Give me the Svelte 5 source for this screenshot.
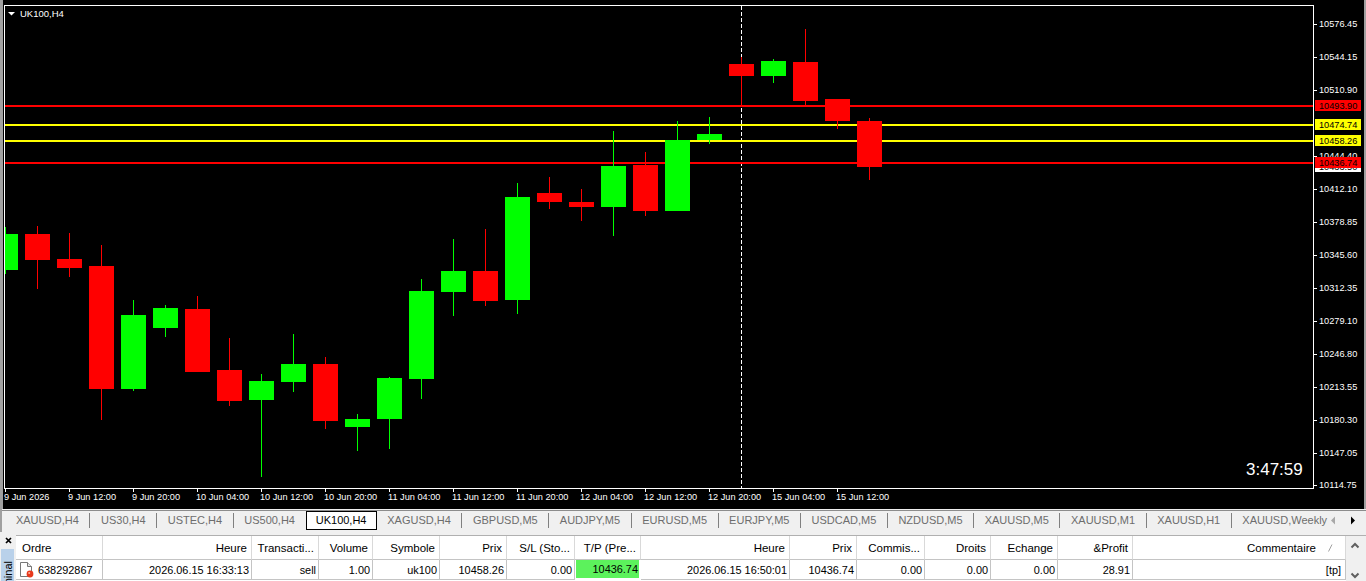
<script>
	// body: [center x, open-top, bottom, wick top, wick bottom, up?]
	const candles = [
		[5, 234, 270, 227, 274, 1],
		[37, 234, 260, 226, 289, 0],
		[69, 259, 268, 233, 277, 0],
		[101, 266, 389, 245, 420, 0],
		[133, 315, 389, 300, 391, 1],
		[165, 308, 328, 305, 337, 1],
		[197, 309, 372, 296, 372, 0],
		[229, 370, 401, 338, 406, 0],
		[261, 381, 400, 374, 477, 1],
		[293, 364, 382, 334, 392, 1],
		[325, 364, 421, 357, 429, 0],
		[357, 419, 427, 414, 451, 1],
		[389, 378, 419, 377, 449, 1],
		[421, 291, 379, 279, 399, 1],
		[453, 271, 292, 239, 316, 1],
		[485, 271, 301, 229, 306, 0],
		[517, 197, 300, 183, 314, 1],
		[549, 193, 202, 177, 209, 0],
		[581, 202, 207, 189, 221, 0],
		[613, 166, 207, 131, 236, 1],
		[645, 165, 211, 152, 216, 0],
		[677, 140, 211, 121, 211, 1],
		[709, 134, 140, 117, 144, 1],
		[741, 64, 76, 57, 105, 0],
		[773, 61, 76, 59, 83, 1],
		[805, 62, 101, 29, 105, 0],
		[837, 99, 121, 99, 129, 0],
		[869, 121, 167, 118, 180, 0]
	];

	const priceLabels = [
		['10576.45', 24], ['10544.15', 57], ['10510.90', 90], ['10444.40', 156],
		['10412.10', 189], ['10378.85', 222], ['10345.60', 255], ['10312.35', 288],
		['10279.10', 321], ['10246.80', 354], ['10213.55', 387], ['10180.30', 420],
		['10147.05', 453], ['10114.75', 485]
	];

	const levels = [
		{ y: 105, color: '#ff0000', label: '10493.90' },
		{ y: 124, color: '#ffff00', label: '10474.74' },
		{ y: 140, color: '#ffff00', label: '10458.26' },
		{ y: 162, color: '#ff0000', label: '10436.74' }
	];

	const dates = [
		'9 Jun 2026', '9 Jun 12:00', '9 Jun 20:00', '10 Jun 04:00', '10 Jun 12:00',
		'10 Jun 20:00', '11 Jun 04:00', '11 Jun 12:00', '11 Jun 20:00', '12 Jun 04:00',
		'12 Jun 12:00', '12 Jun 20:00', '15 Jun 04:00', '15 Jun 12:00'
	];

	const tabs = [
		'XAUUSD,H4', 'US30,H4', 'USTEC,H4', 'US500,H4', 'UK100,H4', 'XAGUSD,H4', 'GBPUSD,M5',
		'AUDJPY,M5', 'EURUSD,M5', 'EURJPY,M5', 'USDCAD,M5', 'NZDUSD,M5', 'XAUUSD,M5',
		'XAUUSD,M1', 'XAUUSD,H1', 'XAUUSD,Weekly'
	];
	const activeTab = 'UK100,H4';

	const columns = [
		{ head: 'Ordre', value: '638292867', left: true },
		{ head: 'Heure', value: '2026.06.15 16:33:13' },
		{ head: 'Transacti...', value: 'sell' },
		{ head: 'Volume', value: '1.00' },
		{ head: 'Symbole', value: 'uk100' },
		{ head: 'Prix', value: '10458.26' },
		{ head: 'S/L (Sto...', value: '0.00' },
		{ head: 'T/P (Pre...', value: '10436.74', hit: true },
		{ head: 'Heure', value: '2026.06.15 16:50:01' },
		{ head: 'Prix', value: '10436.74' },
		{ head: 'Commis...', value: '0.00' },
		{ head: 'Droits', value: '0.00' },
		{ head: 'Echange', value: '0.00' },
		{ head: '&Profit', value: '28.91' },
		{ head: 'Commentaire', value: '[tp]', sort: true }
	];
</script>

<div class="terminal">
	<div class="chart">
		<svg width="1361" height="509" viewBox="3 0 1361 509">
			<rect x="4" y="5" width="1309" height="483" fill="none" stroke="#fff" stroke-width="1" transform="translate(0.5 0.5)" />
			<polygon points="8,12 15,12 11.5,15.5" fill="#fff" />
			<text class="symbol" x="20" y="16.5">UK100,H4</text>

			<line x1="741.5" y1="6" x2="741.5" y2="488" stroke="#fff" stroke-dasharray="4 2" />

			{#each levels as level}
				<rect x="5" y={level.y} width="1308" height="2" fill={level.color} />
			{/each}

			{#each candles as [x, top, bottom, wickTop, wickBottom, up]}
				<rect x={x} y={wickTop} width="1" height={wickBottom - wickTop} fill={up ? '#00ff00' : '#ff0000'} />
				<rect
					x={Math.max(x - 12, 5)}
					y={top}
					width={x - 12 < 5 ? x + 13 - 5 : 25}
					height={bottom - top}
					fill={up ? '#00ff00' : '#ff0000'}
				/>
			{/each}

			{#each priceLabels as [text, y]}
				<rect x="1314" y={y} width="3" height="1" fill="#fff" />
				<text class="axis" x="1319" y={y + 3}>{text}</text>
			{/each}

			<rect x="1315" y="161" width="46" height="11" fill="#fff" />
			<text class="axis dark" x="1319" y="170">10433.50</text>
			{#each levels as level}
				<rect x="1315" y={level.y - 5} width="46" height="11" fill={level.color} />
				<text class="axis dark" x="1319" y={level.y + 4}>{level.label}</text>
			{/each}

			{#each dates as date, i}
				<rect x={5 + i * 64} y="489" width="1" height="3" fill="#fff" />
				<text class="axis" x={4 + i * 64} y="500">{date}</text>
			{/each}

			<text class="clock" x="1246" y="475">3:47:59</text>
		</svg>
	</div>

	<div class="tabs">
		<div class="tab-list">
			{#each tabs as tab, i}
				<span class="tab" class:active={tab === activeTab} class:plain={tabs[i + 1] === activeTab || tab === activeTab}>{tab}</span>
			{/each}
		</div>
		<div class="tab-arrows">
			<svg width="6" height="9" viewBox="0 0 6 9"><path d="M5 0.5 L1 4.5 L5 8.5 Z" fill="#a8a8a8" /></svg>
			<svg width="6" height="9" viewBox="0 0 6 9"><path d="M1 0.5 L5 4.5 L1 8.5 Z" fill="#000" /></svg>
		</div>
	</div>

	<div class="panel">
		<div class="side">
			<svg class="close" width="7" height="7" viewBox="0 0 7 7">
				<path d="M1 1 L6 6 M6 1 L1 6" stroke="#000" stroke-width="1.7" />
			</svg>
			<div class="side-tab"><span>Terminal</span></div>
		</div>

		<div class="table">
			{#each columns as col}
				<div class="cell head" class:left={col.left}>
					{col.head}
					{#if col.sort}
						<svg class="sort" width="5" height="8" viewBox="0 0 5 8"><path d="M0.5 7.5 L4 0.5" stroke="#a0a0a0" fill="none" /></svg>
					{/if}
				</div>
			{/each}
			{#each columns as col, i}
				<div class="cell value" class:left={col.left} class:hit={col.hit}>
					{#if i === 0}
						<svg class="order-icon" width="16" height="17" viewBox="0 0 16 17">
							<path d="M1.5 1.5 H8.5 L12.5 5.5 V15.5 H1.5 Z" fill="#fff" stroke="#777" />
							<path d="M8.5 1.5 V5.5 H12.5" fill="#e8e8e8" stroke="#777" />
							<circle cx="11" cy="13" r="3.4" fill="#e8391c" />
							<circle cx="10.2" cy="12" r="1" fill="#ffb09a" />
						</svg>
					{/if}
					{col.value}
				</div>
			{/each}
		</div>

		<div class="scroll">
			<svg width="10" height="7" viewBox="0 0 10 7"><path d="M1.5 5.5 L5 2 L8.5 5.5" stroke="#606060" stroke-width="2" fill="none" /></svg>
			<svg width="10" height="7" viewBox="0 0 10 7"><path d="M1.5 1.5 L5 5 L8.5 1.5" stroke="#606060" stroke-width="2" fill="none" /></svg>
		</div>
	</div>
</div>

<style>
	:global(body) {
		margin: 0;
		background: #f0f0f0;
	}

	.terminal {
		width: 1366px;
		height: 581px;
		display: flex;
		flex-direction: column;
		overflow: hidden;
		background: #f0f0f0;
		font-family: 'Liberation Sans', Arial, sans-serif;
		font-size: 11px;
		color: #000;
	}

	.chart {
		height: 509px;
		flex: none;
		background: #000;
		border-left: 3px solid #a0a0a0;
		border-right: 2px solid #a0a0a0;
		box-sizing: border-box;
	}

	.chart svg {
		display: block;
	}

	.chart text {
		font-family: 'Liberation Sans', Arial, sans-serif;
		fill: #fff;
	}

	.symbol {
		font-size: 9.5px;
	}

	.axis {
		font-size: 9.2px;
	}

	.chart text.dark {
		fill: #000;
	}

	.clock {
		font-size: 17px;
	}

	.tabs {
		height: 23px;
		flex: none;
		box-sizing: border-box;
		padding-top: 2px;
		padding-left: 3.4px;
		display: flex;
		border-left: 2px solid #a0a0a0;
		background: linear-gradient(#f0f0f0 1px, #8c8c8c 1px, #8c8c8c 2px, #f0f0f0 2px);
	}

	.tab-list {
		width: 1322.6px;
		height: 19px;
		flex: none;
		display: flex;
		overflow: hidden;
		white-space: nowrap;
	}

	.tab {
		flex: none;
		height: 15px;
		margin-top: 2px;
		line-height: 15px;
		padding: 0 10.55px;
		color: #6d6d6d;
		border-right: 1px solid #808080;
	}

	.tab.plain {
		border-right-color: transparent;
	}

	.tab.active {
		margin-top: 0;
		height: 17px;
		line-height: 17px;
		color: #000;
		background: #fff;
		padding: 0 9.2px;
		margin-left: -1px;
		border: 1px solid #000;
	}

	.tab-arrows {
		flex: 1;
		display: flex;
		align-items: center;
		gap: 14px;
		padding-left: 2px;
		padding-bottom: 3px;
	}

	.panel {
		flex: 1;
		min-height: 0;
		display: flex;
		padding-top: 3px;
	}

	.side {
		width: 16px;
		flex: none;
		display: flex;
		flex-direction: column;
		align-items: center;
		padding-top: 2px;
		box-sizing: border-box;
	}

	.close {
		flex: none;
	}

	.side-tab {
		width: 13px;
		flex: 1;
		margin-top: 5px;
		margin-left: -2px;
		background: #b9d1ea;
		position: relative;
		overflow: hidden;
	}

	.side-tab span {
		position: absolute;
		left: 1px;
		top: 12px;
		line-height: 12px;
		writing-mode: vertical-rl;
		transform: rotate(180deg);
	}

	.table {
		width: 1330px;
		flex: none;
		display: grid;
		grid-template-columns: 87px 149px 67px 54px 67px 67px 68px 66px 149px 67px 68px 66px 67px 75px 213px;
		grid-template-rows: 24px 20px;
		background: #fff;
		border-top: 1px solid #b0b0b0;
	}

	.cell {
		box-sizing: border-box;
		padding: 0 4px;
		display: flex;
		align-items: center;
		justify-content: flex-end;
		white-space: nowrap;
		border-right: 1px solid #d9d9d9;
	}

	.cell.left {
		justify-content: flex-start;
		padding-left: 6px;
	}

	.head {
		border-bottom: 1px solid #c4c4c4;
		font-size: 11.5px;
	}

	.value {
		border-right-color: #c4c4c4;
		border-bottom: 1px solid #c4c4c4;
		padding-right: 2px;
		font-size: 10.9px;
	}

	.value:last-child {
		padding-right: 4px;
	}

	.value.left {
		padding-left: 3px;
	}

	.value.hit {
		background: #5cf25c;
		background-clip: padding-box;
		padding-right: 1px;
		border-right: 2px solid #fff;
		border-bottom: 2px solid #fff;
		border-left: 1px solid #fff;
	}

	.order-icon {
		margin-right: 3px;
		flex: none;
	}

	.sort {
		margin-left: 12px;
		margin-right: 8px;
	}

	.scroll {
		flex: 1;
		display: flex;
		flex-direction: column;
		align-items: center;
		justify-content: space-between;
		padding: 6px 2px 2px 0;
		border-top: 1px solid #b0b0b0;
	}
</style>
